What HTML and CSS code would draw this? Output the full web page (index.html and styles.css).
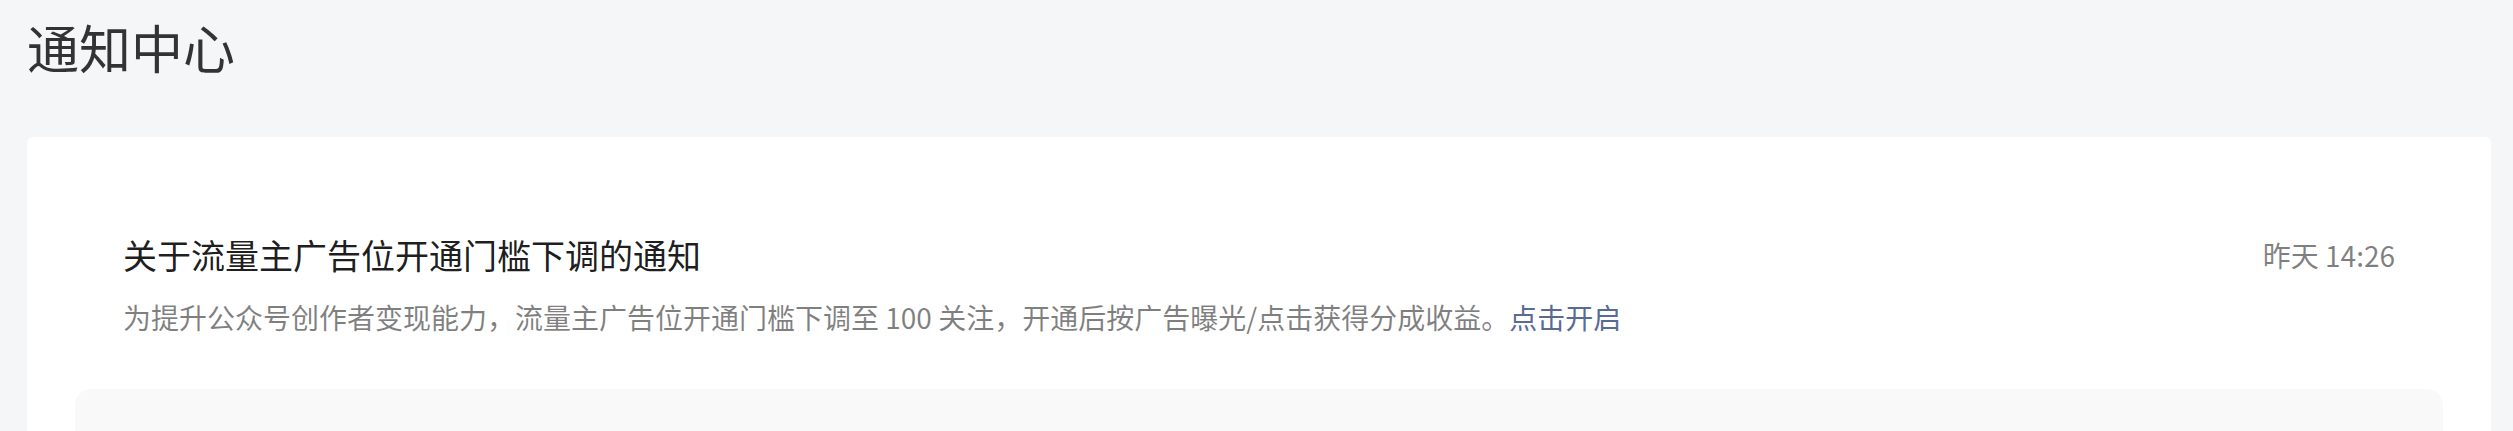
FILE: index.html
```html
<!DOCTYPE html>
<html lang="zh-CN">
<head>
  <meta charset="UTF-8">
  <title>通知中心</title>
  <link rel="stylesheet" href="styles.css">
</head>
<body>
  <h1 class="page-title">通知中心</h1>

  <div class="card">
    <div class="notice">
      <div class="notice-head">
        <div class="notice-title">关于流量主广告位开通门槛下调的通知</div>
        <div class="notice-time">昨天 14:26</div>
      </div>
      <p class="notice-desc">为提升公众号创作者变现能力，流量主广告位开通门槛下调至 100 关注，开通后按广告曝光/点击获得分成收益。<a href="#" class="notice-link">点击开启</a></p>
    </div>

    <div class="notice-more"></div>
  </div>
</body>
</html>
```

FILE: styles.css
```css
html, body {
  margin: 0;
  height: 100%;
  overflow: hidden;
}

body {
  font-family: "Noto Sans CJK SC", "Noto Sans", sans-serif;
  background-color: #f5f6f7;
}

.page-title {
  margin: 11px 0 54px 27px;
  font-size: 52px;
  line-height: 72px;
  font-weight: normal;
  color: #333;
}

.card {
  margin: 0 22px 0 27px;
  background: white;
  border-radius: 6px;
  padding: 0 48px;
  height: 400px;
}

.notice {
  padding: 95px 48px 0;
}

.notice-head {
  display: flex;
  justify-content: space-between;
  align-items: center;
}

.notice-title {
  font-size: 34px;
  line-height: 46px;
  color: rgba(0,0,0,0.9);
}

.notice-time {
  font-size: 28px;
  line-height: 40px;
  color: rgba(0,0,0,0.5);
}

.notice-desc {
  margin: 19px 0 0;
  font-size: 28px;
  line-height: 40px;
  color: rgba(0,0,0,0.5);
}

.notice-link {
  color: #576b95;
  text-decoration: none;
}

.notice-more {
  margin-top: 52px;
  height: 200px;
  background: #f9f9f9;
  border-radius: 16px 16px 0 0;
}
```
